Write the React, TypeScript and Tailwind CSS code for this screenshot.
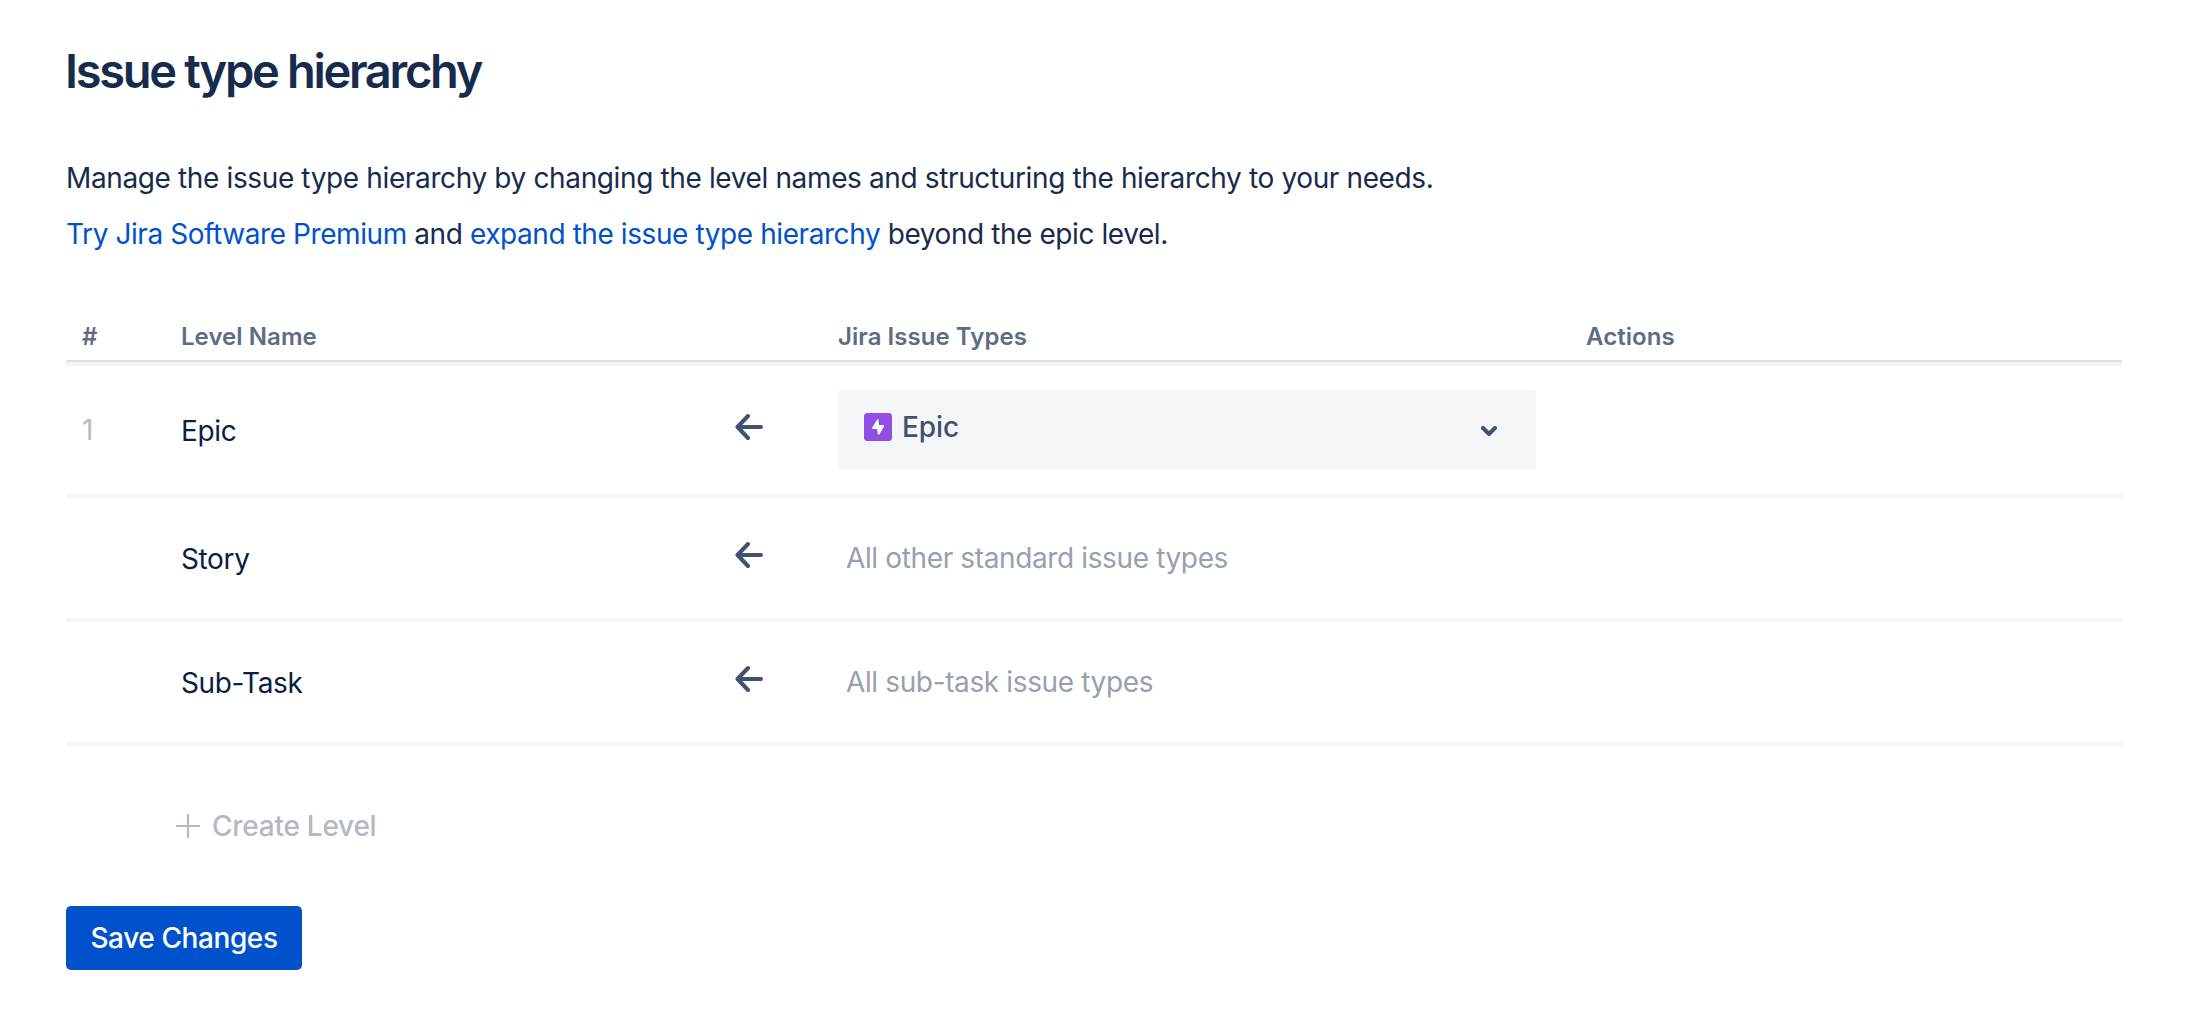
import React from "react";

const ArrowLeft = () => (
  <svg className="mb-1.5" width="28" height="28" viewBox="0 0 28 28" fill="none" stroke="#42526e" strokeWidth="4" strokeLinecap="round" strokeLinejoin="round">
    <path d="M13 3 2.5 14 13 25M3 14h23" />
  </svg>
);

const EpicIcon = () => (
  <svg width="28" height="28" viewBox="0 0 28 28">
    <rect width="28" height="28" rx="3.5" fill="#904ee2" />
    <path d="M13.2 6.6 8.2 14.6q-.4 1.2.6 1.4H13l1 5.6q.5.8 1.2 0L20 13.4q.4-1.2-.6-1.4H15l-.6-5.4q-.6-.8-1.2 0Z" fill="#fff" />
  </svg>
);

const ChevronDown = () => (
  <svg width="16" height="10" viewBox="0 0 16 10" fill="none" stroke="#42526e" strokeWidth="4" strokeLinecap="round" strokeLinejoin="round">
    <path d="M2 2l6 6 6-6" />
  </svg>
);

const Plus = () => (
  <svg width="24" height="24" viewBox="0 0 24 24" fill="none" stroke="#b3b8c4" strokeWidth="2.2" strokeLinecap="round">
    <path d="M12 1v22M1 12h22" />
  </svg>
);

const otherLevels = [
  { name: "Story", types: "All other standard issue types" },
  { name: "Sub-Task", types: "All sub-task issue types" },
];

const columns = "grid grid-cols-[115px_554px_103px_748px_1fr]";

const App = () => {
  return (
    <div className="min-h-screen bg-white pl-[66px] pr-[74px] pt-[42px] font-['Inter',sans-serif] text-[28px] tracking-[-0.37px] text-[#172b4d]">
      <h1 className="-ml-px text-[47px] font-semibold leading-[58px] tracking-[-2.3px]">Issue type hierarchy</h1>

      <div className="mt-[50px] leading-[56px]">
        <p>Manage the issue type hierarchy by changing the level names and structuring the hierarchy to your needs.</p>
        <p className="tracking-[-0.42px]">
          <a className="text-[#0052cc]">Try Jira Software Premium</a> and{" "}
          <a className="text-[#0052cc]">expand the issue type hierarchy</a> beyond the epic level.
        </p>
      </div>

      <div className={`${columns} mt-[60px] h-10 border-b-2 border-[#dfe1e6] text-[24px] font-semibold leading-[30px] tracking-[0.05px] text-[#5e6c84]`}>
        <span className="pl-4">#</span>
        <span>Level Name</span>
        <span />
        <span>Jira Issue Types</span>
        <span>Actions</span>
      </div>

      <div className={`${columns} h-[136px] items-center border-y-4 border-[#f4f5f6]`}>
        <span className="pl-4 text-[#b9bbc0]">1</span>
        <span className="pt-0.5 text-[#091e42]">Epic</span>
        <ArrowLeft />
        <div className="flex h-20 w-[698px] items-center rounded bg-[#f4f5f7] pb-1.5 pl-[26px] pr-[39px] text-[#42526e]">
          <EpicIcon />
          <span className="ml-2.5 font-[550] tracking-[-0.1px]">Epic</span>
          <span className="ml-auto mt-2">
            <ChevronDown />
          </span>
        </div>
      </div>

      {otherLevels.map((level) => (
        <div key={level.name} className={`${columns} h-[124px] items-center border-b-4 border-[#f4f5f6]`}>
          <span />
          <span className="pt-0.5 text-[#091e42]">{level.name}</span>
          <ArrowLeft />
          <span className="pl-2 text-[#97a0af]">{level.types}</span>
        </div>
      ))}

      <div className="mt-[60px] flex h-10 items-center gap-3 pl-[110px] font-[550] tracking-[-0.25px] text-[#b3b8c4]">
        <Plus />
        Create Level
      </div>

      <button className="mt-[60px] h-16 w-[236px] rounded-[5px] bg-[#0052cc] font-[550] tracking-[-0.4px] text-white">
        Save Changes
      </button>
    </div>
  );
};

export default App;
